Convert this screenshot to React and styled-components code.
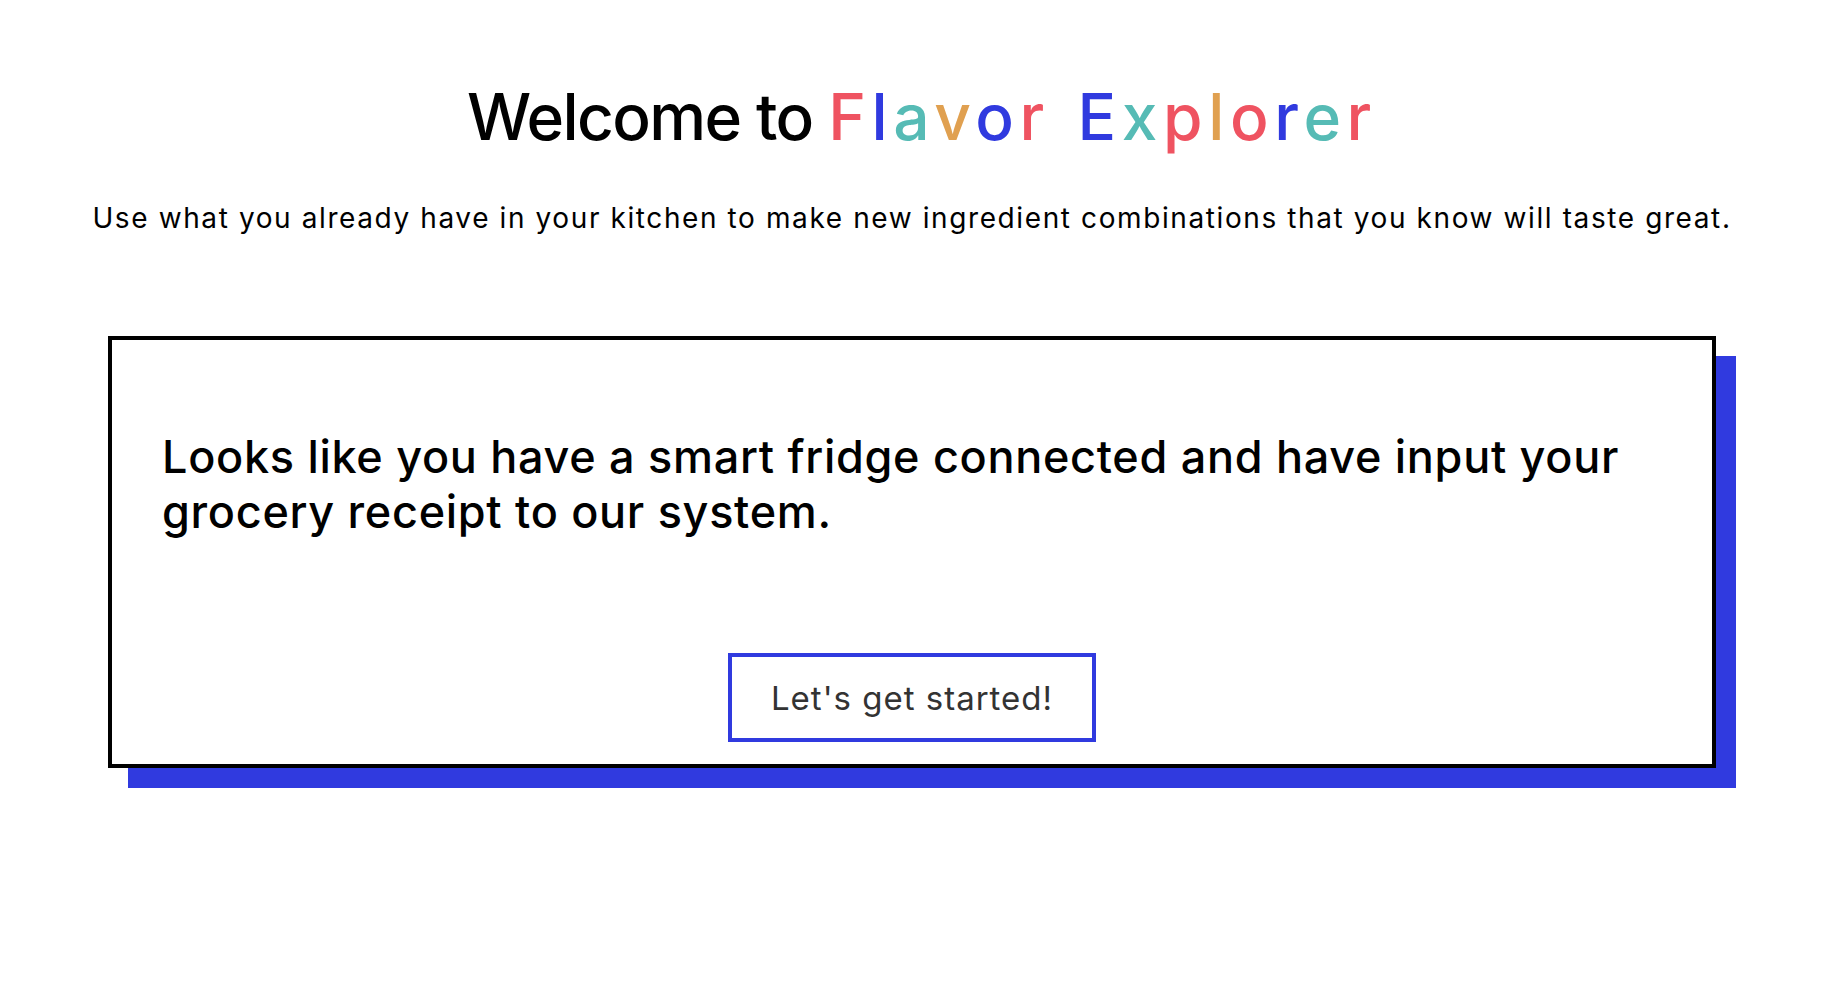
import React from 'react';
import styled, { createGlobalStyle } from 'styled-components';

const GlobalStyle = createGlobalStyle`
  html, body {
    margin: 0;
    padding: 0;
    background: #ffffff;
  }
  body {
    font-family: Inter, 'Noto Sans', 'Liberation Sans', sans-serif;
    color: #000;
  }
`;

const BLUE = '#303adf';
const RED = '#ef5361';
const TEAL = '#56bbb5';
const ORANGE = '#e0a050';

// letter colours for the brand name, in order
const BRAND = [
  ['F', RED],
  ['l', BLUE],
  ['a', TEAL],
  ['v', ORANGE],
  ['o', BLUE],
  ['r', RED],
  [' ', null],
  ['E', BLUE],
  ['x', TEAL],
  ['p', RED],
  ['l', ORANGE],
  ['o', RED],
  ['r', BLUE],
  ['e', TEAL],
  ['r', RED],
];

function App() {
  return (
    <Page>
      <GlobalStyle />
      <Header>
        <Title>
          Welcome to{' '}
          <Brand>
            {BRAND.map(([ch, color], i) =>
              ch === ' ' ? (
                <Gap key={i}>{'\u00a0'}</Gap>
              ) : (
                <Letter key={i} color={color}>
                  {ch}
                </Letter>
              )
            )}
          </Brand>
        </Title>
        <Subtitle>
          Use what you already have in your kitchen to make new ingredient
          combinations that you know will taste great.
        </Subtitle>
      </Header>
      <Main>
        <Card>
          <CardText>
            Looks like you have a smart fridge connected and have input your
            grocery receipt to our system.
          </CardText>
          <Actions>
            <StartButton type="button">Let's get started!</StartButton>
          </Actions>
        </Card>
      </Main>
    </Page>
  );
}

const Page = styled.div`
  min-height: 988px;
  padding-top: 78px;
  box-sizing: border-box;
`;

const Header = styled.header`
  display: flex;
  flex-direction: column;
  align-items: center;
  text-align: center;
`;

const Title = styled.h1`
  margin: 0;
  font-size: 64px;
  line-height: 77px;
  font-weight: 500;
  letter-spacing: -1.6px;
`;

const Brand = styled.span`
  letter-spacing: 5.6px;
`;

const Letter = styled.span`
  color: ${({ color }) => color || 'inherit'};
`;

const Gap = styled.span`
  margin-right: 5px;
`;

const Subtitle = styled.p`
  margin: 46px 20px 0 0;
  font-size: 28px;
  line-height: 34px;
  font-weight: 400;
  letter-spacing: 1.6px;
`;

const Main = styled.main`
  padding: 101px 128px 0 108px;
`;

const Card = styled.section`
  border: 4px solid #000;
  background: #fff;
  box-shadow: 20px 20px 0 ${BLUE};
  padding: 89px 50px 22px;
`;

const CardText = styled.h2`
  margin: 0;
  font-size: 45px;
  line-height: 55px;
  font-weight: 500;
  letter-spacing: 0.7px;
`;

const Actions = styled.div`
  display: flex;
  justify-content: center;
  margin-top: 114px;
`;

const StartButton = styled.button`
  font-family: inherit;
  font-size: 33px;
  line-height: 38px;
  letter-spacing: 1px;
  color: #333;
  background: #fff;
  border: 4px solid ${BLUE};
  width: 368px;
  height: 89px;
  cursor: pointer;
`;

export default App;
